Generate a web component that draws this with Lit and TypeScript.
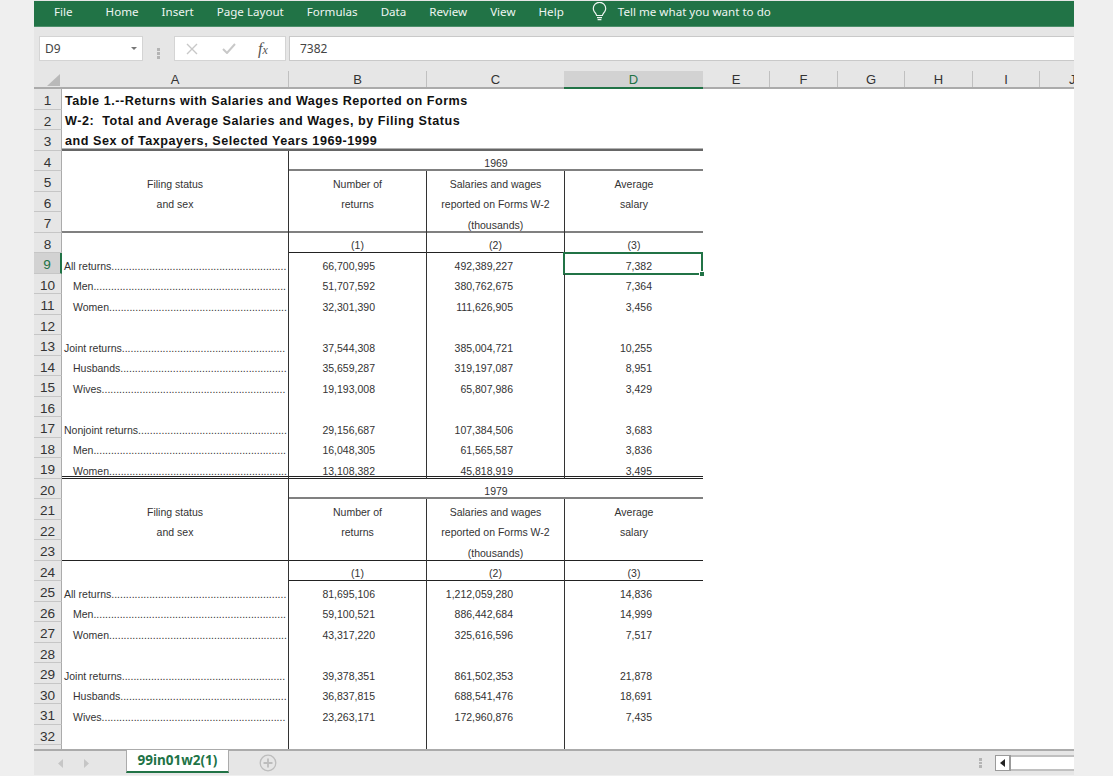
import { LitElement, html, css } from "lit";
import { customElement } from "lit/decorators.js";

type Row = { a?: string; ind?: boolean; lead?: boolean; b?: string; c?: string; d?: string; kind?: string; span?: string; title?: string; thick?: boolean };

const head = (yr: string, hard: boolean): Row[] => [
  { span: yr, kind: "soft" },
  { a: "Filing status", b: "Number of", c: "Salaries and wages", d: "Average" },
  { a: "and sex", b: "returns", c: "reported on Forms W-2", d: "salary" },
  { c: "(thousands)", kind: hard ? "line-all" : "soft-all" },
  { b: "(1)", c: "(2)", d: "(3)", kind: "line" },
];
const d = (a: string, ind: boolean, b: string, c: string, dd: string, kind = ""): Row => ({ a, ind, lead: true, b, c, d: dd, kind });

const ROWS: Row[] = [
  { title: "Table 1.--Returns with Salaries and Wages Reported on Forms" },
  { title: "W-2:  Total and Average Salaries and Wages, by Filing Status" },
  { title: "and Sex of Taxpayers, Selected Years 1969-1999", thick: true },
  ...head("1969", false),
  d("All returns", false, "66,700,995", "492,389,227", "7,382", "sel"),
  d("Men", true, "51,707,592", "380,762,675", "7,364"),
  d("Women", true, "32,301,390", "111,626,905", "3,456"),
  {},
  d("Joint returns", false, "37,544,308", "385,004,721", "10,255"),
  d("Husbands", true, "35,659,287", "319,197,087", "8,951"),
  d("Wives", true, "19,193,008", "65,807,986", "3,429"),
  {},
  d("Nonjoint returns", false, "29,156,687", "107,384,506", "3,683"),
  d("Men", true, "16,048,305", "61,565,587", "3,836"),
  d("Women", true, "13,108,382", "45,818,919", "3,495", "dbl-all"),
  ...head("1979", true),
  d("All returns", false, "81,695,106", "1,212,059,280", "14,836"),
  d("Men", true, "59,100,521", "886,442,684", "14,999"),
  d("Women", true, "43,317,220", "325,616,596", "7,517"),
  {},
  d("Joint returns", false, "39,378,351", "861,502,353", "21,878"),
  d("Husbands", true, "36,837,815", "688,541,476", "18,691"),
  d("Wives", true, "23,263,171", "172,960,876", "7,435"),
  {},
  {},
];

const COLS = [
  ["A", 227], ["B", 138], ["C", 138], ["D", 139], ["E", 67], ["F", 68], ["G", 67], ["H", 68], ["I", 67], ["J", 34],
] as const;
const TABS = ["File", "Home", "Insert", "Page Layout", "Formulas", "Data", "Review", "View", "Help"];

const ctx = document.createElement("canvas").getContext("2d")!;
ctx.font = '10.5px "Liberation Sans"';
const leader = (label: string, ind: boolean) => {
  const avail = 226 - (ind ? 11 : 2);
  const n = Math.floor((avail - ctx.measureText(label).width) / ctx.measureText(".").width);
  return label + ".".repeat(Math.max(0, n));
};

@customElement("app-root")
export class AppRoot extends LitElement {
  static styles = css`
    :host { display: block; width: 1113px; height: 776px; background: #efefef; overflow: hidden; font-family: "Liberation Sans", Arial, sans-serif; }
    .app { margin-left: 34px; width: 1040px; height: 775px; padding-top: 1px; box-sizing: border-box; display: flex; flex-direction: column; background: #e6e6e6; overflow: hidden; }
    .ribbon { flex: none; height: 26px; background: #217346; border-bottom: 1px solid #4d8f6b; display: flex; align-items: center; padding: 0 0 4px 20px; gap: 23px; color: #eef5f1; font: 11.6px "Noto Sans", sans-serif; box-sizing: border-box; }
    .ribbon .tab1 { margin-right: 10px; }
    .tell { display: flex; align-items: center; gap: 11px; margin-left: 5px; }
    .tell svg { display: block; }
    .fbar { flex: none; height: 44px; padding-top: 9px; box-sizing: border-box; display: flex; align-items: flex-start; }
    .box { background: #fff; height: 25px; box-sizing: border-box; border: 1px solid #d4d4d4; display: flex; align-items: center; color: #444; font: 12px "Noto Sans", sans-serif; }
    .name { width: 104px; margin-left: 5px; padding-left: 5px; justify-content: space-between; padding-right: 5px; }
    .caret { width: 0; height: 0; border-left: 3.5px solid transparent; border-right: 3.5px solid transparent; border-top: 3.5px solid #777; }
    .grip { width: 3px; margin: 0 14px; align-self: center; display: flex; flex-direction: column; gap: 1.5px; }
    .grip i { display: block; width: 2.5px; height: 2.5px; background: #b4b4b4; }
    .fx { width: 112px; justify-content: flex-start; padding-left: 11px; gap: 24px; }
    .fx svg { display: block; flex: none; }
    .fx .f { font: italic 16px "Liberation Serif", serif; color: #555; margin-left: -2px; }
    .fx .f small { font-size: 12px; }
    .input { flex: 1; margin-left: 3px; padding-left: 10px; border-right: none; border-color: #c9c9c9; }
    .colhead { flex: none; height: 18px; display: flex; box-sizing: border-box; border-bottom: 2px solid #ababab; font-size: 13px; color: #333; }
    .corner { flex: none; width: 28px; display: flex; justify-content: flex-end; align-items: flex-end; padding: 0 2px 1px 0; box-sizing: border-box; }
    .corner svg { display: block; }
    .ch { flex: none; box-sizing: border-box; border-right: 1px solid #c0c0c0; text-align: center; line-height: 18px; overflow: hidden; }
    .ch.on { background: #d2d2d2; color: #217346; border-bottom: 2px solid #217346; height: 18px; margin: 0 0 -2px -1px; border-right: none; }
    .ch.last { border-right: none; text-align: left; padding-left: 29px; }
    .sheet { flex: 1; min-height: 0; overflow: hidden; display: grid; grid-template-columns: 28px 227px 138px 138px 138px 1fr; grid-auto-rows: 20.5px; background: #fff; }
    .rh { grid-column: 1; box-sizing: border-box; background: #e6e6e6; border-bottom: 1px solid #c6c6c6; border-right: 1px solid #ababab; text-align: center; font-size: 13.6px; line-height: 20px; padding-top: 2px; color: #333; overflow: hidden; }
    .rh.on { background: #d2d2d2; color: #217346; border-right: 2px solid #217346; }
    .c { box-sizing: border-box; font-size: 10.5px; color: #333; white-space: nowrap; display: flex; align-items: flex-end; justify-content: center; line-height: 12px; padding-bottom: 2px; position: relative; min-width: 0; overflow: hidden; }
    .v { border-right: 1px solid #333; }
    .lead { justify-content: flex-start; padding-left: 2px; }
    .lead.ind { padding-left: 11px; }
    .num { justify-content: flex-end; padding-right: 51px; }
    .title { grid-column: 2 / 6; font-weight: 700; font-size: 12.6px; letter-spacing: 0.53px; color: #111; justify-content: flex-start; padding-left: 3px; line-height: 14px; padding-bottom: 2px; white-space: pre; }
    .title.thick { box-shadow: inset 0 -2.500px 0 #666; padding-bottom: 3px; }
    .span3 { grid-column: 3 / 6; }
    .soft { box-shadow: inset 0 -2px 0 #808080; }
    .line { box-shadow: inset 0 -1px 0 #222; }
    .dbl { box-shadow: inset 0 -1px 0 #222, inset 0 -2px 0 #fff, inset 0 -3px 0 #222; }
    .cellsel { overflow: visible; }
    .selbox { position: absolute; left: -2px; right: 0; top: -1px; bottom: -1px; border: 2px solid #217346; pointer-events: none; }
    .handle { position: absolute; right: -4px; bottom: -4px; width: 4px; height: 4px; background: #217346; border: 1px solid #fff; }
    .tabs { flex: none; height: 26px; box-sizing: border-box; border-top: 2px solid #ababab; display: flex; align-items: flex-start; position: relative; }
    .nav { width: 92px; display: flex; padding: 8px 0 0 24px; gap: 21px; box-sizing: border-box; flex: none; }
    .nav svg { display: block; }
    .sheet-tab { flex: none; width: 103px; height: 24px; margin-top: -2px; box-sizing: border-box; background: #fff; border: 1px solid #ababab; border-bottom: 2px solid #217346; color: #217346; font: 700 13.5px "Noto Sans", sans-serif; text-align: center; line-height: 20px; }
    .plus { margin: 3px 0 0 30px; display: block; flex: none; }
    .right { margin-left: auto; display: flex; align-items: flex-start; }
    .right .grip { margin: 7px 13px 0 0; align-self: flex-start; gap: 1px; }
    .scroll { width: 79px; height: 16px; margin-top: 4px; display: flex; box-sizing: border-box; background: #fff; border-top: 2px solid #c0c0c0; border-bottom: 2px solid #c0c0c0; }
    .arrow { width: 16px; height: 16px; margin-top: -2px; box-sizing: border-box; border: 1px solid #9a9a9a; border-right: 2px solid #9a9a9a; background: #fff; display: flex; align-items: center; justify-content: center; }
    .arrow svg { display: block; }
  `;

  private bulb() {
    return html`<svg width="15" height="20" viewBox="0 0 15 20" fill="none" stroke="#eef5f1" stroke-width="1.2"><path d="M4.6 13.5c-.3-1.6-1.3-2.4-2.3-3.8A6 6 0 0 1 1.3 6.5a6 6 0 0 1 12.400 0c0 1.300-.4 2.300-1 3.200-1 1.400-2 2.200-2.300 3.800z"/><path d="M5 15.600h5M5.600 17.600h3.800"/></svg>`;
  }

  private row(r: Row, i: number) {
    const n = i + 1;
    const sel = r.kind === "sel";
    const rh = html`<div class="rh ${sel ? "on" : ""}">${n}</div>`;
    if (r.title) {
      return html`${rh}<div class="c title ${r.thick ? "thick" : ""}">${r.title}</div>`;
    }
    const [kind, all] = (r.kind ?? "").split("-");
    const line = kind === "sel" ? "" : kind;
    if (r.span) {
      return html`${rh}<div class="c v"></div><div class="c span3 ${line}">${r.span}</div>`;
    }
    const num = r.lead ? "num" : "";
    return html`${rh}
      <div class="c v ${all ? line : ""} ${r.lead ? "lead" : ""} ${r.ind ? "ind" : ""}">${r.a ? (r.lead ? leader(r.a, !!r.ind) : r.a) : ""}</div>
      <div class="c v ${line} ${num}">${r.b ?? ""}</div>
      <div class="c v ${line} ${num}">${r.c ?? ""}</div>
      <div class="c ${line} ${num} ${sel ? "cellsel" : ""}">${r.d ?? ""}${sel ? html`<div class="selbox"><div class="handle"></div></div>` : ""}</div>`;
  }

  render() {
    return html`<div class="app">
      <div class="ribbon">
        ${TABS.map((t, i) => html`<span class="${i === 0 ? "tab1" : ""}">${t}</span>`)}
        <div class="tell">${this.bulb()}<span>Tell me what you want to do</span></div>
      </div>
      <div class="fbar">
        <div class="box name"><span>D9</span><i class="caret"></i></div>
        <div class="grip"><i></i><i></i><i></i></div>
        <div class="box fx">
          <svg width="12" height="12" viewBox="0 0 12 12" stroke="#c8c8c8" stroke-width="1.4" fill="none"><path d="M1 1l10 10M11 1L1 11"/></svg>
          <svg width="14" height="11" viewBox="0 0 14 11" stroke="#c8c8c8" stroke-width="2" fill="none"><path d="M1 6l4 4 8-9"/></svg>
          <span class="f">f<small>x</small></span>
        </div>
        <div class="box input">7382</div>
      </div>
      <div class="colhead">
        <div class="corner"><svg width="13" height="12" viewBox="0 0 13 12"><path d="M13 0v12H0z" fill="#b9b9b9"/></svg></div>
        ${COLS.map(([c, w]) => html`<div class="ch ${c === "D" ? "on" : ""} ${c === "J" ? "last" : ""}" style="width:${w}px">${c}</div>`)}
      </div>
      <div class="sheet">${ROWS.map((r, i) => this.row(r, i))}</div>
      <div class="tabs">
        <div class="nav">
          <svg width="5" height="9" viewBox="0 0 5 9"><path d="M5 0v9L0 4.500z" fill="#c6c6c6"/></svg>
          <svg width="5" height="9" viewBox="0 0 5 9"><path d="M0 0v9l5-4.500z" fill="#c6c6c6"/></svg>
        </div>
        <div class="sheet-tab">99in01w2(1)</div>
        <svg class="plus" width="18" height="18" viewBox="0 0 18 18" fill="none" stroke="#bdbdbd"><circle cx="9" cy="9" r="7.800" stroke-width="1.300"/><path d="M9 4.500v9M4.500 9h9" stroke-width="1.800"/></svg>
        <div class="right">
          <div class="grip"><i></i><i></i><i></i></div>
          <div class="scroll"><div class="arrow"><svg width="5" height="8" viewBox="0 0 5 8"><path d="M5 0v8L0 4z" fill="#222"/></svg></div></div>
        </div>
      </div>
    </div>`;
  }
}
